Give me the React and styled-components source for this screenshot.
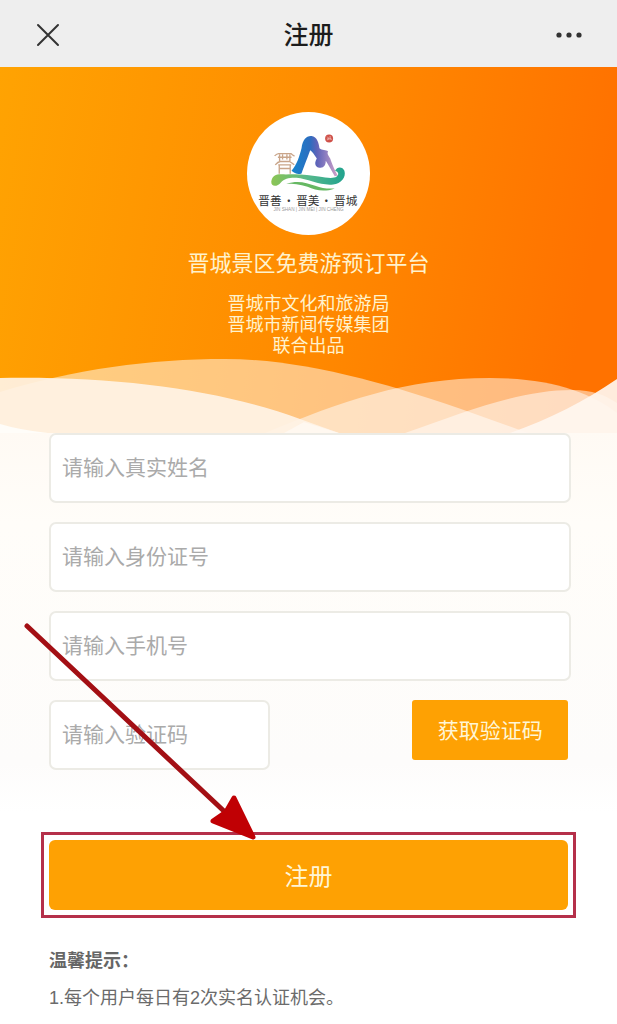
import React, { useState } from 'react';
import styled, { createGlobalStyle } from 'styled-components';


const GlobalStyle = createGlobalStyle`
    * {
        box-sizing: border-box;
    }

    body {
        margin: 0;
        background: #fff;
        font-family: "Liberation Sans", "Noto Sans CJK SC", sans-serif;
    }

    button,
    input {
        font-family: inherit;
    }
`;

const PageTag = styled.div`
    min-height: 100vh;
    overflow: hidden;
`;

const NavBar = styled.header`
    height: 67px;
    padding: 2px 30px 0;
    display: flex;
    justify-content: space-between;
    align-items: center;
    background: #eee;

    h1 {
        margin: 0;
        font-size: 25px;
        line-height: 36px;
        font-weight: 500;
        color: #1c1c1c;
    }
`;

const IconButton = styled.button`
    width: 36px;
    height: 36px;
    padding: 0;
    border: 0;
    background: none;
    color: #333;

    svg {
        display: block;
    }
`;

const Hero = styled.section`
    position: relative;
    padding: 45px 20px 76px;
    display: flex;
    flex-direction: column;
    align-items: center;
    text-align: center;
    color: #fff2cc;
    background: linear-gradient(100deg, #ffa302 0%, #ff8c00 48%, #ff7200 92%);

    h2 {
        margin: 13px 0 14px;
        font-size: 22px;
        line-height: 32px;
        font-weight: 400;
    }

    p {
        margin: 0;
        font-size: 18px;
        line-height: 21px;
    }
`;

const Logo = styled.svg`
    width: 123px;
    height: 123px;
    border-radius: 50%;
    background: #fff;
`;

const Waves = styled.svg`
    position: absolute;
    left: 0;
    bottom: 0;
    width: 100%;
    height: 80px;
`;

const Content = styled.main`
    padding: 0 46px 24px 49px;
    background: linear-gradient(#fffaf4 0, #fffdf9 90px, #fdfcfb 330px, #fff 380px);
`;

const Form = styled.form`
    display: flex;
    flex-direction: column;
    gap: 19px;
`;

const Field = styled.input`
    width: ${props => props.$width || '100%'};
    height: 70px;
    padding: 0 11px 1px;
    border: 2px solid #ecebe5;
    border-radius: 7px;
    outline: 0;
    background: #fff;
    font-size: 21px;
    color: #333;

    &::placeholder {
        color: #aaa;
        opacity: 1;
    }
`;

const CodeRow = styled.div`
    display: flex;
    justify-content: space-between;
    align-items: flex-start;
    padding-right: 3px;
`;

const Button = styled.button`
    width: ${props => props.$width || '100%'};
    height: ${props => (props.$large ? '70px' : '60px')};
    padding: 0 0 2px;
    border: 0;
    border-radius: ${props => (props.$large ? '6px' : '3px')};
    background: #fea103;
    font-size: ${props => (props.$large ? '24px' : '21px')};
    color: #fff6d6;
`;

const SubmitArea = styled.div`
    position: relative;
    margin: 51px 3px 0 0;
`;

const Highlight = styled.span`
    position: absolute;
    inset: -8px;
    border: 3px solid #b5304a;
    pointer-events: none;
`;

const Arrow = styled.svg`
    position: absolute;
    left: -29px;
    bottom: 68px;
    width: 240px;
    height: 222px;
    pointer-events: none;
`;

const Tips = styled.section`
    padding-top: 37px;
    font-size: 18px;
    line-height: 28px;
    color: #6b6b6b;

    h3 {
        margin: 0;
        font-size: 18px;
        font-weight: 700;
        color: #666;
    }

    p {
        margin: 9px 0 0;
    }
`;


function LogoMark() {
  return (
    <Logo viewBox="20 22 370 370" aria-hidden="true">
      <defs>
        <linearGradient id="peak" x1="0" x2="1">
          <stop offset="0" stopColor="#1485cf" />
          <stop offset="0.4" stopColor="#2d6dbf" />
          <stop offset="0.55" stopColor="#5f63b8" />
          <stop offset="0.7" stopColor="#8378bf" />
          <stop offset="1" stopColor="#d3a3c8" />
        </linearGradient>
        <linearGradient id="river" x1="0" x2="1">
          <stop offset="0" stopColor="#8dc554" />
          <stop offset="0.5" stopColor="#55b88c" />
          <stop offset="1" stopColor="#22a38e" />
        </linearGradient>
      </defs>
      <g fill="none" stroke="#c9a58a" strokeWidth="4">
        <path d="M103 154 Q110 147 115 147 H152 Q157 152 163 155" />
        <path d="M113 158 H154 M118 149 V170 M149 149 V170 M127 149 V165 M140 149 V165" />
        <path d="M105 181 Q113 172 120 171 H148 Q155 175 162 181" />
        <path d="M114 181 H153 M117 181 V208 M150 181 V208 M117 192 H150" />
      </g>
      <path d="M154 199 C171 179 178 154 184 131 C188 104 198 93 214 94 C231 97 236 114 238 131 C246 139 258 134 264 141 C258 149 271 159 272 167 C278 184 285 199 293 213 L284 215 C276 201 266 184 257 169 C257 184 249 194 232 188 C221 181 226 169 230 162 C222 149 216 141 210 137 C204 154 194 179 184 207 C174 211 162 207 154 199 Z" fill="url(#peak)" />
      <path d="M93 231 C96 209 114 207 137 210 C177 207 206 212 236 216 C260 220 280 223 290 216 C298 210 295 202 285 199 C291 185 308 186 313 199 C319 219 303 238 279 240 C241 244 203 223 169 220 C149 219 132 222 122 234 C111 248 92 248 93 231 Z" fill="url(#river)" />
      <path d="M138 238 C176 226 199 236 225 244 C245 252 263 253 284 252 C255 263 227 259 202 247 C179 239 158 238 138 238 Z" fill="#66b863" />
      <circle cx="267" cy="102" r="12" fill="#cf5149" />
      <path d="M261 96 L266 101 L262 107 M270 94 V101 L274 106 M260 103 H274" fill="none" stroke="#f6d3cf" strokeWidth="2" />
      <g fill="#343434" fontSize="35" fontFamily="'Noto Sans CJK SC', sans-serif" textAnchor="middle">
        <text x="89" y="301">晋善</text>
        <text x="146" y="301">·</text>
        <text x="203" y="301">晋美</text>
        <text x="259" y="301">·</text>
        <text x="317" y="301">晋城</text>
      </g>
      <text x="205" y="320" fontSize="14" fill="#999" fontFamily="'Liberation Sans', sans-serif" textAnchor="middle">JIN SHAN | JIN MEI | JIN CHENG</text>
    </Logo>
  );
}

function HeroWaves() {
  return (
    <Waves viewBox="0 0 617 80" preserveAspectRatio="none" aria-hidden="true">
      <path d="M0 39 C75 16 150 6 225 6 C300 6 385 29 475 61 L528 80 H0 Z" fill="#fff" fillOpacity="0.5" />
      <path d="M265 80 C340 49 405 25 490 25 C550 25 590 39 617 60 V80 Z" fill="#fff" fillOpacity="0.5" />
      <path d="M405 80 C470 57 520 37 573 37 C592 37 605 42 617 50 V80 Z" fill="#fff" fillOpacity="0.5" />
      <path d="M0 25 C120 23 220 37 300 66 L339 80 H0 Z" fill="#fff3e6" fillOpacity="0.92" />
      <path d="M0 71 Q20 77 48 80 H0 Z" fill="#fffdf9" />
      <path d="M284 80 L304 69 L339 80 Z" fill="#fff9f3" fillOpacity="0.8" />
      <path d="M510 80 C550 66 585 48 617 26 V80 Z" fill="#fff6f0" fillOpacity="0.92" />
    </Waves>
  );
}

function App() {
  const [form, setForm] = useState({
    name: '', idCard: '', phone: '', code: '',
  });

  const onChangeHandler = (e) => {
    setForm({ ...form, [e.target.name]: e.target.value });
  };

  const onFormSubmit = (e) => {
    e.preventDefault();
  };

  const field = (name, placeholder) => ({
    name,
    placeholder,
    'aria-label': placeholder,
    value: form[name],
    onChange: onChangeHandler,
  });

  return (
    <PageTag>
      <GlobalStyle />
      <NavBar>
        <IconButton type="button" aria-label="关闭">
          <svg width="36" height="36" viewBox="0 0 36 36" fill="none" stroke="currentColor" strokeWidth="2" strokeLinecap="round">
            <path d="M8 8 L28 28 M28 8 L8 28" />
          </svg>
        </IconButton>
        <h1>注册</h1>
        <IconButton type="button" aria-label="更多">
          <svg width="36" height="36" viewBox="0 0 36 36" fill="currentColor">
            <circle cx="8" cy="18" r="2.6" />
            <circle cx="18" cy="18" r="2.6" />
            <circle cx="28" cy="18" r="2.6" />
          </svg>
        </IconButton>
      </NavBar>

      <Hero>
        <HeroWaves />
        <LogoMark />
        <h2>晋城景区免费游预订平台</h2>
        <p>晋城市文化和旅游局</p>
        <p>晋城市新闻传媒集团</p>
        <p>联合出品</p>
      </Hero>

      <Content>
        <Form onSubmit={onFormSubmit}>
          <Field type="text" {...field('name', '请输入真实姓名')} />
          <Field type="text" {...field('idCard', '请输入身份证号')} />
          <Field type="tel" {...field('phone', '请输入手机号')} />
          <CodeRow>
            <Field $width="42.5%" type="text" {...field('code', '请输入验证码')} />
            <Button $width="30%" type="button">获取验证码</Button>
          </CodeRow>
          <SubmitArea>
            <Button $large type="submit">注册</Button>
            <Highlight />
            <Arrow viewBox="0 0 240 222" aria-hidden="true">
              <path d="M7 6 L206 193" stroke="#a30f14" strokeWidth="5" strokeLinecap="round" />
              <path d="M214 178 L233 217 L193 201 L206 192 Z" fill="#c00004" stroke="#c00004" strokeWidth="5" strokeLinejoin="round" />
            </Arrow>
          </SubmitArea>
        </Form>

        <Tips>
          <h3>温馨提示：</h3>
          <p>1.每个用户每日有2次实名认证机会。</p>
        </Tips>
      </Content>
    </PageTag>
  );
}

export default App;
